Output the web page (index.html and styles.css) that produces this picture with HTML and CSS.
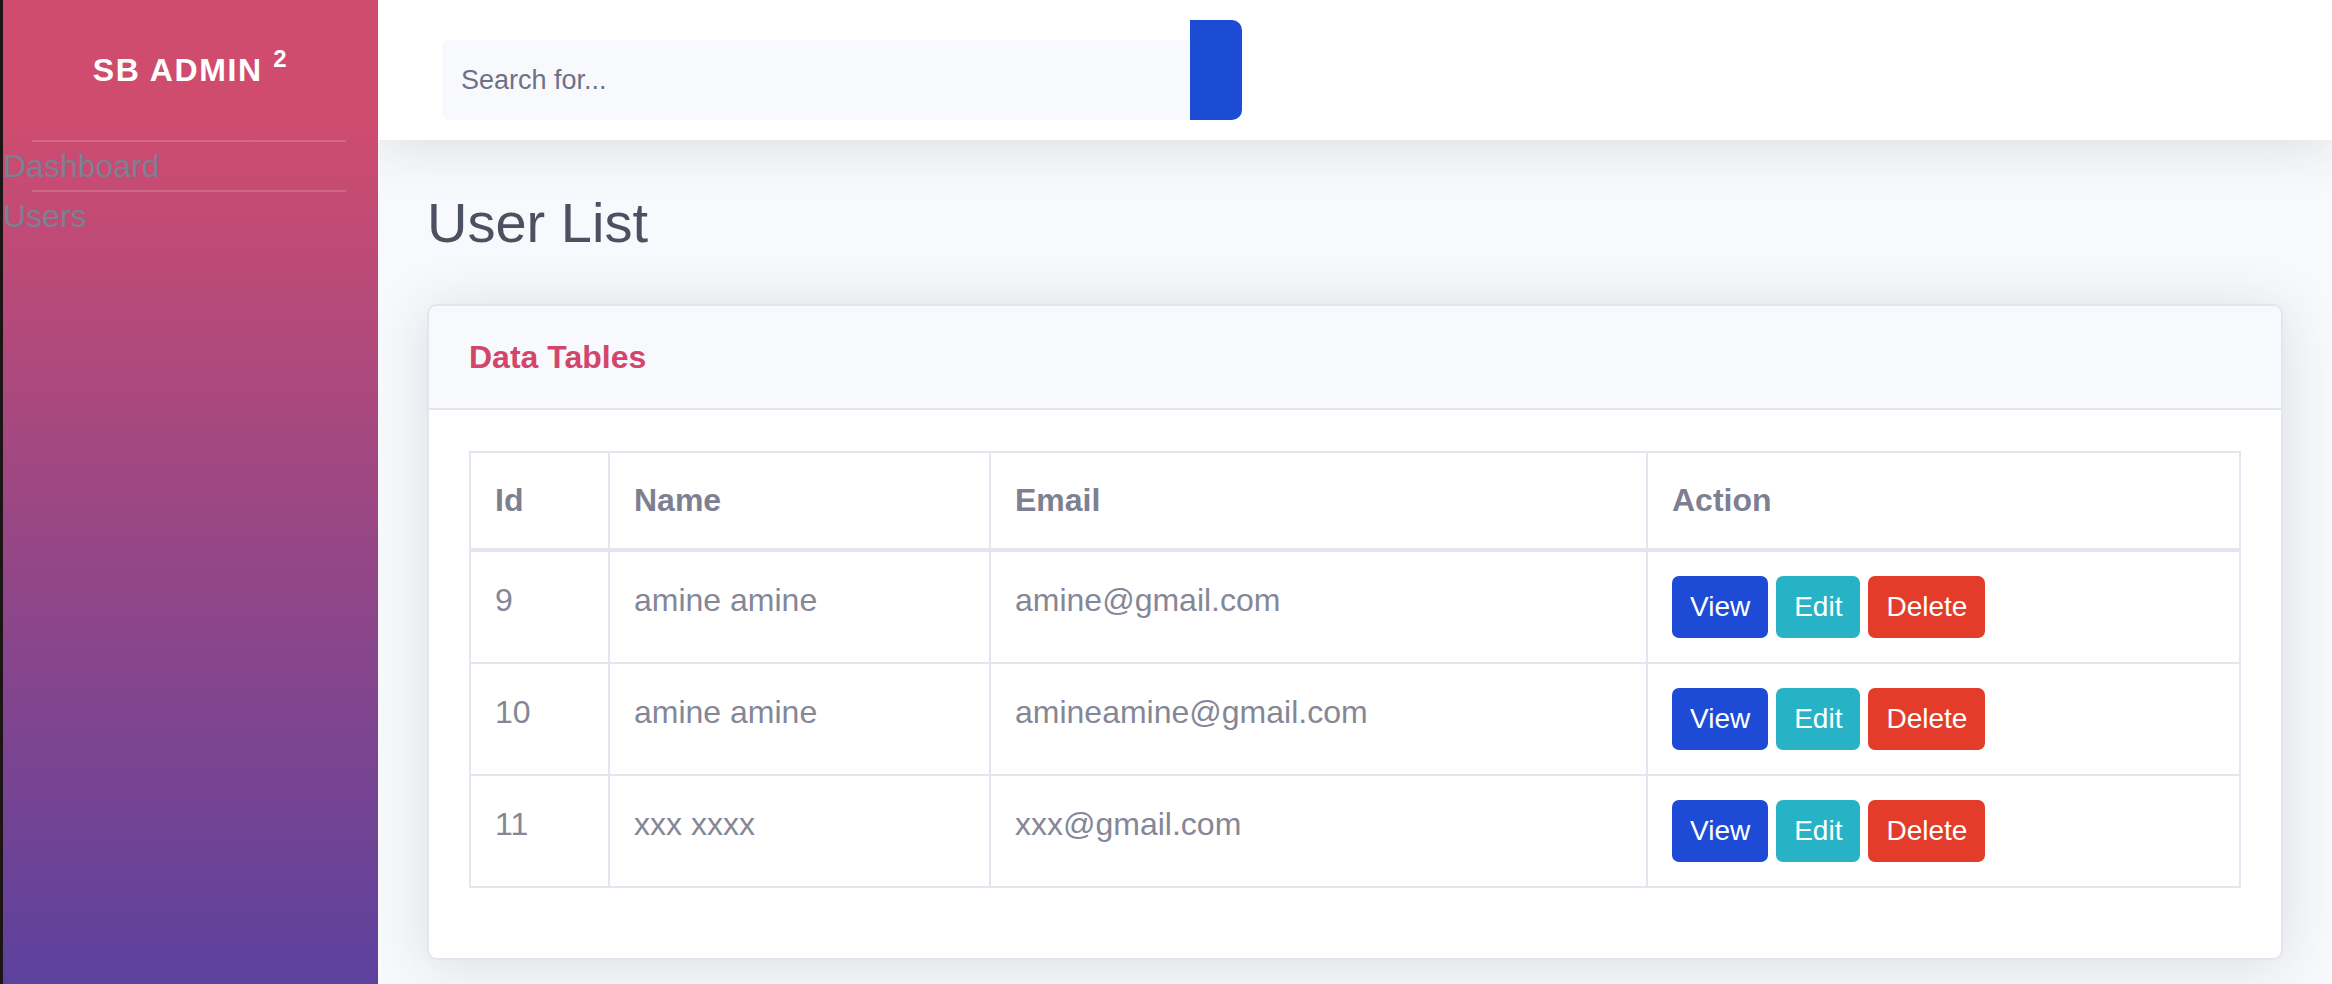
FILE: index.html
```html
<!DOCTYPE html>
<html lang="en">
<head>
<meta charset="utf-8">
<title>User List</title>
<link rel="stylesheet" href="styles.css">
</head>
<body>
  <aside class="sidebar">
    <div class="brand"><span class="brand-text">SB Admin <sup>2</sup></span></div>
    <div class="divider"></div>
    <a class="nav-link" href="#">Dashboard</a>
    <div class="divider"></div>
    <a class="nav-link" href="#">Users</a>
  </aside>
  <div class="main">
    <header class="topbar">
      <input class="search-input" type="text" placeholder="Search for...">
      <button class="search-btn" type="button"></button>
    </header>
    <section class="content">
      <h1 class="page-title">User List</h1>
      <div class="card">
        <div class="card-header">Data Tables</div>
        <div class="card-body">
          <table class="table">
            <thead>
              <tr>
                <th class="col-id">Id</th>
                <th class="col-name">Name</th>
                <th class="col-email">Email</th>
                <th>Action</th>
              </tr>
            </thead>
            <tbody>
              <tr>
                <td>9</td>
                <td>amine amine</td>
                <td>amine@gmail.com</td>
                <td><div class="actions"><a class="btn btn-view" href="#">View</a><a class="btn btn-edit" href="#">Edit</a><a class="btn btn-delete" href="#">Delete</a></div></td>
              </tr>
              <tr>
                <td>10</td>
                <td>amine amine</td>
                <td>amineamine@gmail.com</td>
                <td><div class="actions"><a class="btn btn-view" href="#">View</a><a class="btn btn-edit" href="#">Edit</a><a class="btn btn-delete" href="#">Delete</a></div></td>
              </tr>
              <tr>
                <td>11</td>
                <td>xxx xxxx</td>
                <td>xxx@gmail.com</td>
                <td><div class="actions"><a class="btn btn-view" href="#">View</a><a class="btn btn-edit" href="#">Edit</a><a class="btn btn-delete" href="#">Delete</a></div></td>
              </tr>
            </tbody>
          </table>
        </div>
      </div>
    </section>
  </div>
</body>
</html>
```

FILE: styles.css
```css
html, body {
  height: 100%;
}

body {
  margin: 0;
  display: flex;
  overflow: hidden;
  border-left: 3px solid #1d1416;
  background: #f8f9fc;
  font-family: "Liberation Sans", Arial, sans-serif;
  color: #858796;
}

.sidebar {
  position: relative;
  z-index: 2;
  width: 375px;
  flex: none;
  background: linear-gradient(180deg, #d04c6e 0%, #cf4c6f 12%, #5c419d 100%);
}

.brand {
  height: 140px;
  display: flex;
  align-items: center;
  justify-content: center;
  color: #fff;
  font-size: 32px;
  font-weight: 800;
  letter-spacing: 1.6px;
  text-transform: uppercase;
}

.brand-text {
  line-height: 48px;
  white-space: nowrap;
}

.brand sup {
  font-size: 24px;
  line-height: 0;
  vertical-align: 14px;
}

.divider {
  height: 2px;
  margin: 0 32px 0 29px;
  background: rgba(255, 255, 255, 0.16);
}

.nav-link {
  display: block;
  font-size: 32px;
  line-height: 48px;
  color: #7c8093;
  text-decoration: none;
}

.main {
  flex: 1;
  display: flex;
  flex-direction: column;
  min-width: 0;
}

.topbar {
  position: relative;
  z-index: 1;
  height: 140px;
  box-sizing: border-box;
  flex: none;
  display: flex;
  align-items: flex-end;
  padding: 0 0 20px 64px;
  background: #fff;
  box-shadow: 0 5px 56px rgba(58, 59, 69, 0.15);
}

.search-input {
  width: 748px;
  height: 80px;
  box-sizing: border-box;
  border: none;
  outline: none;
  border-radius: 8px 0 0 8px;
  background: #f8f9fc;
  padding: 0 19px;
  font-family: "Liberation Sans", Arial, sans-serif;
  font-size: 27px;
  color: #6e7185;
}

.search-input::placeholder {
  color: #6e7185;
}

.search-btn {
  width: 52px;
  height: 100px;
  border: none;
  padding: 0;
  border-radius: 0 10px 10px 0;
  background: #1c4bd4;
}

.content {
  padding: 49px 49px 0 49px;
}

.page-title {
  margin: 0 0 47px;
  font-size: 56px;
  line-height: 68px;
  font-weight: 400;
  color: #4d5061;
}

.card {
  background: #fff;
  border: 2px solid #e3e6f0;
  border-radius: 10px;
  overflow: hidden;
  box-shadow: 0 5px 56px rgba(58, 59, 69, 0.15);
}

.card-header {
  height: 102px;
  display: flex;
  align-items: center;
  padding: 0 40px;
  background: #f8f9fc;
  border-bottom: 2px solid #e3e6f0;
  font-size: 32px;
  font-weight: 700;
  color: #d2466c;
}

.card-body {
  padding: 41px 40px 70px;
}

.table {
  width: 100%;
  table-layout: fixed;
  border-collapse: separate;
  border-spacing: 0;
  border-top: 2px solid #e3e6f0;
  border-left: 2px solid #e3e6f0;
  font-size: 32px;
  line-height: 48px;
}

.table th,
.table td {
  box-sizing: border-box;
  padding: 24px;
  border-right: 2px solid #e3e6f0;
  border-bottom: 2px solid #e3e6f0;
  text-align: left;
  vertical-align: top;
  color: #858796;
}

.table th {
  padding-top: 23px;
  font-weight: 700;
  color: #7d8091;
  border-bottom-width: 4px;
}

.col-id { width: 139px; }
.col-name { width: 381px; }
.col-email { width: 657px; }

.actions {
  display: flex;
  gap: 8px;
}

.btn {
  display: block;
  padding: 8px 16px;
  border: 2px solid transparent;
  border-radius: 7px;
  font-size: 28px;
  line-height: 42px;
  color: #fff;
  text-decoration: none;
}

.btn-view { background: #1d4bd5; border-color: #1d4bd5; }
.btn-edit { background: #27b2c6; border-color: #27b2c6; }
.btn-delete { background: #e33c2a; border-color: #e33c2a; }
```
